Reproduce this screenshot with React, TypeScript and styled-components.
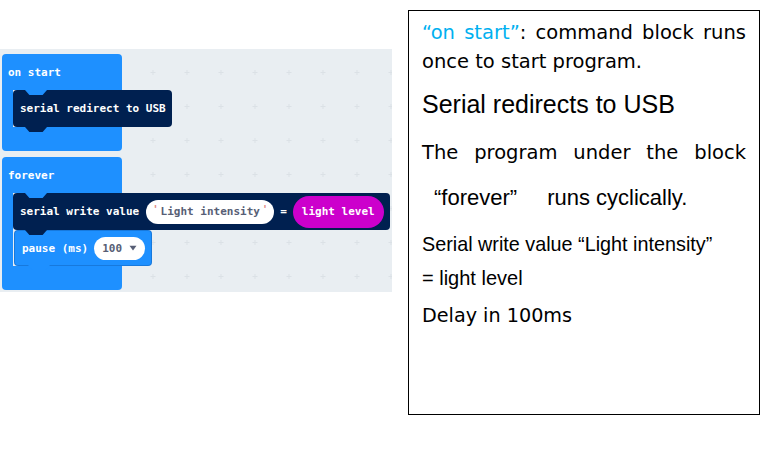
import React from "react";
import styled, { createGlobalStyle } from "styled-components";

const Global = createGlobalStyle`
  html, body { margin: 0; padding: 0; background: #ffffff; }
  body { width: 772px; height: 453px; overflow: hidden; }
`;

const BLUE = "#1e90ff";
const NAVY = "#002050";
const MAGENTA = "#cc00cc";

const Page = styled.div`
  display: flex;
  align-items: flex-start;
  width: 772px;
  height: 453px;
`;

const Workspace = styled.div`
  position: relative;
  flex-shrink: 0;
  margin-top: 49px;
  width: 392px;
  height: 243px;
  background: #e9eef2;
  overflow: hidden;
`;

const Grid = styled.svg`
  position: absolute;
  left: 0;
  top: 0;
`;

const Stack = styled.div<{ $x: number; $y: number }>`
  position: absolute;
  left: ${(p) => p.$x}px;
  top: ${(p) => p.$y}px;
  display: flex;
  flex-direction: column;
  align-items: flex-start;
  font-family: "DejaVu Sans Mono", "Liberation Mono", monospace;
  font-weight: bold;
  font-size: 11px;
  color: #ffffff;
`;

const CHead = styled.div<{ $color: string }>`
  position: relative;
  box-sizing: border-box;
  width: 120px;
  height: 36px;
  padding: 11px 0 0 6px;
  line-height: 16px;
  background: ${(p) => p.$color};
  border-radius: 4px 4px 0 0;
  white-space: pre;
`;

const CBody = styled.div`
  display: flex;
  align-items: stretch;
`;

const CArm = styled.div<{ $color: string }>`
  width: 11px;
  background: ${(p) => p.$color};
`;

const Statements = styled.div`
  display: flex;
  flex-direction: column;
  align-items: flex-start;
`;

const CFoot = styled.div<{ $color: string }>`
  width: 120px;
  height: 24px;
  background: ${(p) => p.$color};
  border-radius: 0 0 4px 4px;
`;

const Statement = styled.div<{ $color: string; $h: number; $outline?: boolean; $inset?: number }>`
  position: relative;
  box-sizing: border-box;
  display: flex;
  align-items: center;
  gap: 6px;
  height: ${(p) => p.$h}px;
  margin-left: ${(p) => p.$inset ?? 0}px;
  padding: 0 6px 0 7px;
  background: ${(p) => p.$color};
  border-radius: 4px;
  border: ${(p) => (p.$outline ? "1px solid rgba(0, 40, 100, 0.22)" : "none")};
  white-space: pre;
`;

const Tab = styled.span<{ $color: string; $left: number }>`
  position: absolute;
  z-index: 2;
  left: ${(p) => p.$left}px;
  bottom: -5px;
  width: 22px;
  height: 5px;
  background: ${(p) => p.$color};
  clip-path: polygon(0 0, 100% 0, 80% 100%, 20% 100%);
`;

const Label = styled.span<{ $after?: number }>`
  margin-right: ${(p) => p.$after ?? 0}px;
`;

const StringPill = styled.span`
  display: flex;
  align-items: center;
  justify-content: center;
  gap: 2px;
  width: 128px;
  height: 24px;
  border-radius: 12px;
  background: #ffffff;
  color: #575e75;
`;

const Quote = styled.span`
  color: #e0877f;
  font-size: 10px;
  align-self: flex-start;
  margin-top: 4px;
`;

const ReporterPill = styled.span<{ $color: string }>`
  display: flex;
  align-items: center;
  height: 32px;
  padding: 0 9px;
  border-radius: 16px;
  background: ${(p) => p.$color};
  color: #ffffff;
`;

const NumberPill = styled.span`
  display: flex;
  align-items: center;
  gap: 7px;
  box-sizing: border-box;
  width: 51px;
  height: 23px;
  padding-left: 8px;
  border-radius: 12px;
  background: #ffffff;
  color: #575e75;
`;

const Caret = styled.svg`
  display: block;
`;

const Note = styled.div`
  flex-shrink: 0;
  box-sizing: border-box;
  margin: 10px 0 0 16px;
  width: 352px;
  height: 405px;
  border: 1px solid #000000;
  padding: 0 13px;
  color: #000000;
`;

const NoteLine = styled.div<{ $font: "verdana" | "arial"; $size: number; $lh: number; $mt: number; $justify?: boolean }>`
  margin-top: ${(p) => p.$mt}px;
  font-family: ${(p) => (p.$font === "verdana" ? '"DejaVu Sans", Verdana, sans-serif' : '"Liberation Sans", Arial, sans-serif')};
  font-size: ${(p) => p.$size}px;
  line-height: ${(p) => p.$lh}px;
  text-align: ${(p) => (p.$justify ? "justify" : "left")};
  text-align-last: ${(p) => (p.$justify ? "justify" : "left")};
  white-space: nowrap;
`;

const Accent = styled.span`
  color: #00b0f0;
`;

const Quoted = styled.span`
  padding-left: 12px;
`;

const Spread = styled.span`
  margin-left: 30px;
`;

function GridDots() {
  return (
    <Grid width={392} height={243}>
      <defs>
        <pattern id="wsgrid" width="34" height="34" patternUnits="userSpaceOnUse">
          <path d="M14.5 23.5h5M17 21v5" stroke="#dbe1e6" strokeWidth="1" fill="none" />
        </pattern>
      </defs>
      <rect width="392" height="243" fill="url(#wsgrid)" />
    </Grid>
  );
}

export default function App() {
  return (
    <>
      <Global />
      <Page>
        <Workspace>
          <GridDots />
          <Stack $x={2} $y={5}>
            <CHead $color={BLUE}>
              on start
              <Tab $color={BLUE} $left={23} />
            </CHead>
            <CBody>
              <CArm $color={BLUE} />
              <Statements>
                <Statement $color={NAVY} $h={37}>
                  serial redirect to USB
                  <Tab $color={NAVY} $left={12} />
                </Statement>
              </Statements>
            </CBody>
            <CFoot $color={BLUE} />
          </Stack>

          <Stack $x={2} $y={108}>
            <CHead $color={BLUE}>
              forever
              <Tab $color={BLUE} $left={23} />
            </CHead>
            <CBody>
              <CArm $color={BLUE} />
              <Statements>
                <Statement $color={NAVY} $h={37}>
                  <Label $after={1}>serial write value</Label>
                  <StringPill>
                    <Quote>'</Quote>
                    Light intensity
                    <Quote>'</Quote>
                  </StringPill>
                  <Label>=</Label>
                  <ReporterPill $color={MAGENTA}>light level</ReporterPill>
                  <Tab $color={NAVY} $left={12} />
                </Statement>
                <Statement $color={BLUE} $h={36} $outline $inset={1}>
                  pause (ms)
                  <NumberPill>
                    100
                    <Caret width="8" height="6" viewBox="0 0 8 6">
                      <path d="M0.5 0.8h7L4 5.4z" fill="#575e75" />
                    </Caret>
                  </NumberPill>
                  <Tab $color={BLUE} $left={13} />
                </Statement>
              </Statements>
            </CBody>
            <CFoot $color={BLUE} />
          </Stack>
        </Workspace>

        <Note>
          <NoteLine $font="verdana" $size={19.5} $lh={29} $mt={7} $justify>
            <Accent>“on start”</Accent>: command block runs
          </NoteLine>
          <NoteLine $font="verdana" $size={19.5} $lh={29} $mt={0}>
            once to start program.
          </NoteLine>
          <NoteLine $font="arial" $size={25} $lh={30} $mt={13}>
            Serial redirects to USB
          </NoteLine>
          <NoteLine $font="verdana" $size={19.5} $lh={29} $mt={19} $justify>
            The program under the block
          </NoteLine>
          <NoteLine $font="arial" $size={22} $lh={29} $mt={16}>
            <Quoted>“forever”</Quoted>
            <Spread>runs cyclically.</Spread>
          </NoteLine>
          <NoteLine $font="arial" $size={19.8} $lh={28} $mt={18}>
            Serial write value “Light intensity”
          </NoteLine>
          <NoteLine $font="arial" $size={20} $lh={28} $mt={6}>
            = light level
          </NoteLine>
          <NoteLine $font="verdana" $size={19.2} $lh={29} $mt={9}>
            Delay in 100ms
          </NoteLine>
        </Note>
      </Page>
    </>
  );
}
